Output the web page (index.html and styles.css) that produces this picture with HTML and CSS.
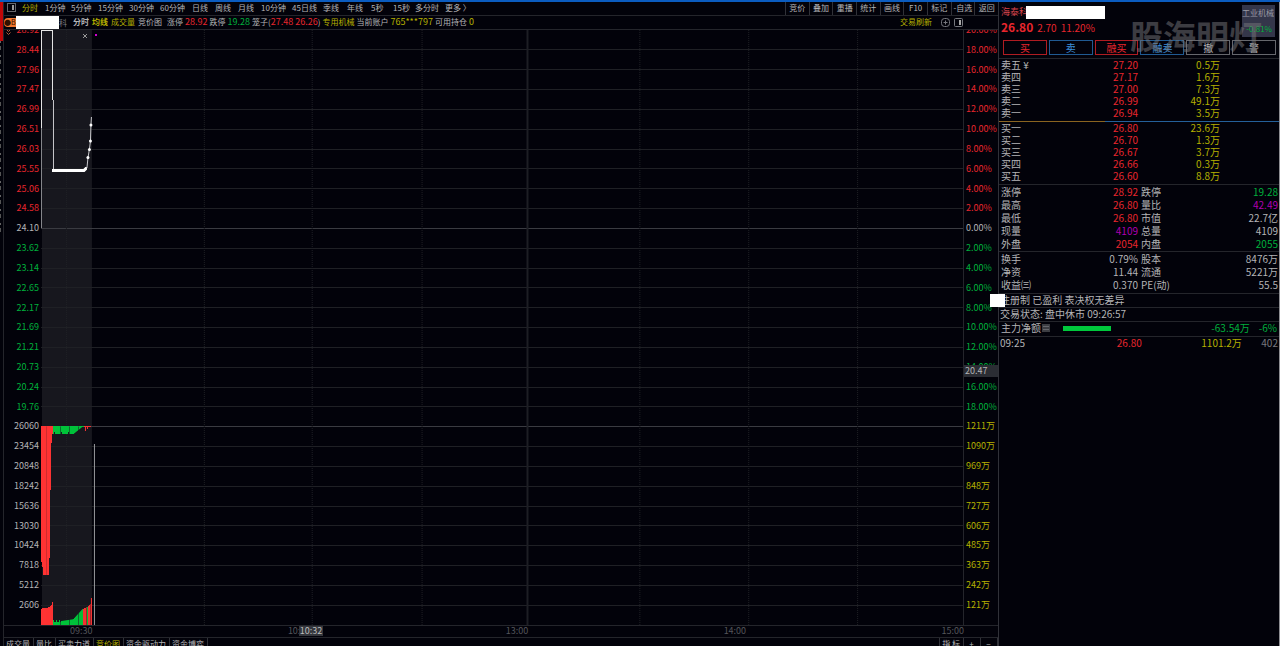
FILE: index.html
```html
<!DOCTYPE html>
<html lang="zh-CN">
<head>
<meta charset="utf-8">
<title>分时</title>
<link rel="stylesheet" href="styles.css">
</head>
<body>
<div class="app">
  <aside class="rail"><span class="rail-active"></span><span class="rail-marks"></span></aside>
  <main class="main">
    <nav class="toolbar">
      <button class="icon-btn" aria-label="侧栏"><svg width="9" height="9" viewBox="0 0 9 9"><rect x=".5" y=".5" width="8" height="8" fill="none" stroke="#66676c"/><rect x="5" y="2" width="2" height="5" fill="#999"/></svg></button>
      <div class="periods">
        <button class="yellow">分时</button><button>1分钟</button><button>5分钟</button><button>15分钟</button><button>30分钟</button><button>60分钟</button><button>日线</button><button>周线</button><button>月线</button><button>10分钟</button><button>45日线</button><button>季线</button><button>年线</button><button>5秒</button><button>15秒</button><button>多分时</button><button>更多 〉</button>
      </div>
      <div class="tools">
        <button>竞价</button><button>叠加</button><button>重播</button><button>统计</button><button>画线</button><button>F10</button><button>标记</button><button>-自选</button><button>返回</button>
      </div>
    </nav>
    <div class="info">
      <span class="badge">●B</span><span class="mask"></span><span class="dim">科</span>
      <div class="info-items">
        <b>分时</b><b class="yellow">均线</b><span class="series yellow">成交量</span><span class="series">竞价图</span>
        <span class="limit">涨停</span><i class="red">28.92</i><span>跌停</span><i class="green">19.28</i><span>笼子(<i class="red">27.48 26.26</i>)</span>
        <span class="yellow">专用机械</span><span>当前账户</span><i class="yellow">765***797</i><span>可用持仓</span><i class="yellow">0</i>
      </div>
      <button class="refresh yellow">交易刷新</button>
      <svg width="22" height="9" viewBox="0 0 22 9" fill="none" stroke="#77787e"><rect x=".5" y=".5" width="8" height="8" rx="3"/><path d="M4.500 2.500v4M2.500 4.500h4"/><rect x="13.500" y=".5" width="8" height="8" rx="1"/><rect x="18" y="2" width="2" height="5" fill="#aaa" stroke="none"/></svg>
    </div>
    <section class="chart">
      <div class="axis axis-left">
        <span class="red">28.92</span><span class="red">28.44</span><span class="red">27.96</span><span class="red">27.47</span><span class="red">26.99</span><span class="red">26.51</span><span class="red">26.03</span><span class="red">25.55</span><span class="red">25.06</span><span class="red">24.58</span><span>24.10</span><span class="green">23.62</span><span class="green">23.14</span><span class="green">22.65</span><span class="green">22.17</span><span class="green">21.69</span><span class="green">21.21</span><span class="green">20.73</span><span class="green">20.24</span><span class="green">19.76</span><span>26060</span><span>23454</span><span>20848</span><span>18242</span><span>15636</span><span>13030</span><span>10424</span><span>7818</span><span>5212</span><span>2606</span>
        <svg class="chevrons" width="5" height="6" viewBox="0 0 5 6" fill="none" stroke="#b86038"><path d="M.5.500l2 2 2-2M.5 3.500l2 2 2-2"/></svg>
      </div>
      <div class="plot">
        <svg class="graph" viewBox="0 0 923 595" preserveAspectRatio="none">
          <rect x="1" y="0" width="50" height="595" fill="#17171e"/>
          <g id="grid"></g>
          <g id="volume"></g>
          <g fill="none" stroke="#e8e8e8">
            <path d="M.5 0V98"/>
            <path d="M.5 98V198" stroke="#88898e"/>
            <path d="M0 0H12" stroke-width="2"/>
            <path d="M11.500 0V70"/>
            <path d="M12.500 70V140" stroke="#c8c8cc"/>
            <path d="M11 140.500H43l2-2h1" stroke="#fff" stroke-width="3"/>
            <path d="M46 138l1-10 1.500-9 1-8 .5-16 .5-8" stroke="#c8c8cc"/>
            <path d="M53.500 414V595" stroke="#98999e"/>
          </g>
          <g fill="#fff"><circle cx="47" cy="127.500" r="1.500"/><circle cx="48.500" cy="119.500" r="1.500"/><circle cx="49.500" cy="111" r="1.500"/><circle cx="50" cy="95" r="1.500"/></g>
        </svg>
        <button class="close" aria-label="关闭"><svg width="4" height="4" viewBox="0 0 4 4"><path d="M0 0l4 4M4 0L0 4" stroke="#999"/></svg></button>
        <span class="dot"></span>
      </div>
      <div class="axis axis-right">
        <span class="red">20.00%</span><span class="red">18.00%</span><span class="red">16.00%</span><span class="red">14.00%</span><span class="red">12.00%</span><span class="red">10.00%</span><span class="red">8.00%</span><span class="red">6.00%</span><span class="red">4.00%</span><span class="red">2.00%</span><span>0.00%</span><span class="green">2.00%</span><span class="green">4.00%</span><span class="green">6.00%</span><span class="green">8.00%</span><span class="green">10.00%</span><span class="green">12.00%</span><span class="green">14.00%</span><span class="green">16.00%</span><span class="green">18.00%</span><span class="yellow">1211万</span><span class="yellow">1090万</span><span class="yellow">969万</span><span class="yellow">848万</span><span class="yellow">727万</span><span class="yellow">606万</span><span class="yellow">485万</span><span class="yellow">363万</span><span class="yellow">242万</span><span class="yellow">121万</span>
        <output class="price-tag">20.47</output>
      </div>
    </section>
    <div class="times">
      <span>09:30</span><span>10:30</span><span>13:00</span><span>14:00</span><span>15:00</span>
      <output class="time-tag">10:32</output>
    </div>
    <nav class="tabs">
      <button>成交量</button><button>量比</button><button>买卖力道</button><button class="yellow">竞价图</button><button>资金驱动力</button><button>资金博弈</button>
      <button class="tab-right">指 标</button><button class="zoom">+</button><button class="zoom">−</button>
    </nav>
  </main>
  <aside class="quote">
    <header class="head">
      <div class="name">海泰科<span class="name-mask"></span></div>
      <div class="price"><strong>26.80</strong><span>2.70</span><span>11.20%</span></div>
      <div class="sector">工业机械<em>-0.81%</em></div>
      <div class="actions"><button class="buy">买</button><button class="sell">卖</button><button class="buy">融买</button><button class="sell">融卖</button><button>撤</button><button>警</button></div>
      <div class="watermark">股海明灯</div>
    </header>
    <table class="book">
      <tr><th>卖五 ¥</th><td>27.20</td><td>0.5万</td></tr>
      <tr><th>卖四</th><td>27.17</td><td>1.6万</td></tr>
      <tr><th>卖三</th><td>27.00</td><td>7.3万</td></tr>
      <tr><th>卖二</th><td>26.99</td><td>49.1万</td></tr>
      <tr><th>卖一</th><td>26.94</td><td>3.5万</td></tr>
    </table>
    <div class="ratio"></div>
    <table class="book">
      <tr><th>买一</th><td>26.80</td><td>23.6万</td></tr>
      <tr><th>买二</th><td>26.70</td><td>1.3万</td></tr>
      <tr><th>买三</th><td>26.67</td><td>3.7万</td></tr>
      <tr><th>买四</th><td>26.66</td><td>0.3万</td></tr>
      <tr><th>买五</th><td>26.60</td><td>8.8万</td></tr>
    </table>
    <div class="block">
      <table class="stats">
        <tr><th>涨停</th><td class="red">28.92</td><th>跌停</th><td class="green">19.28</td></tr>
        <tr><th>最高</th><td class="red">26.80</td><th>量比</th><td class="purple">42.49</td></tr>
        <tr><th>最低</th><td class="red">26.80</td><th>市值</th><td>22.7亿</td></tr>
        <tr><th>现量</th><td class="purple">4109</td><th>总量</th><td>4109</td></tr>
        <tr><th>外盘</th><td class="red">2054</td><th>内盘</th><td class="green">2055</td></tr>
      </table>
    </div>
    <div class="block basics">
      <table class="stats">
        <tr><th>换手</th><td>0.79%</td><th>股本</th><td>8476万</td></tr>
        <tr><th>净资</th><td>11.44</th><th>流通</th><td>5221万</td></tr>
        <tr><th>收益㈢</th><td>0.370</td><th>PE(动)</th><td>55.5</td></tr>
      </table>
    </div>
    <div class="line tags"><span class="tag-mask"></span>注册制 已盈利 表决权无差异</div>
    <div class="line">交易状态: 盘中休市 09:26:57</div>
    <div class="line flow"><span>主力净额</span><button class="mini" aria-label="列表"><svg width="8" height="8" viewBox="0 0 8 8"><rect width="8" height="8" fill="#3c3d42"/><path d="M1 2.500h6M1 5.500h6" stroke="#66676c"/></svg></button><span class="bar"></span><span class="green net">-63.54万</span><span class="green">-6%</span></div>
    <div class="trade"><span>09:25</span><span class="red">26.80</span><span class="yellow">1101.2万</span><span class="dim">402</span></div>
  </aside>
</div>
<script src="chart.js"></script>
</body>
</html>
```

FILE: styles.css
```css
* { box-sizing: border-box; }
:root { --line: #24252b; --red: #e8262d; --green: #00b03c; --yellow: #b5b000; --text: #b4b4b6; }
body { margin: 0; background: #02020a; color: var(--text); font: 9px/12px "Noto Sans CJK SC", "Open Sans", sans-serif; }
button { margin: 0; padding: 0; border: 0; background: none; color: inherit; font: inherit; white-space: nowrap; }
i, em { font-style: normal; }
.red { color: var(--red); }
.green { color: var(--green); }
.yellow { color: var(--yellow); }
.purple { color: #b000b0; }
.dim { color: #77787e; }
.app { display: flex; height: 100vh; border-top: 2px solid #0b5cc0; overflow: hidden; }
.rail { display: flex; flex-direction: column; flex: none; width: 4px; border-right: 1px solid var(--line); }
.rail-active { height: 39px; background: #c00808; }
.rail-marks { flex: 1; width: 1px; max-height: 192px; background: repeating-linear-gradient(#666 0 2px, #02020a 2px 5px, #555 5px 9px, #02020a 9px 14px); }
.main { display: flex; flex: 1; flex-direction: column; min-width: 0; border-right: 1px solid #303138; }

.toolbar { display: flex; height: 14px; flex: none; border-bottom: 1px solid var(--line); line-height: 11px; font-size: 8px; }
.icon-btn { display: flex; flex: none; width: 18px; padding: 1px 0 0 3px; }
.periods { display: grid; flex: 1; grid-template-columns: 23px 26px 27px 31px 31px 32px 23px 23px 23px 31px 31px 24px 24px 22px 22px 30px auto; }
.periods button { padding-bottom: 2px; text-align: left; }
.tools { display: grid; flex: none; width: 213px; grid-template-columns: repeat(9, 1fr); }
.tools button { padding-bottom: 2px; border-left: 1px solid #303138; text-align: center; }

.info { position: relative; z-index: 1; display: flex; align-items: center; flex: none; height: 14px; padding-right: 35px; border-bottom: 1px solid var(--line); background: #02020a; font-size: 8px; line-height: 12px; white-space: nowrap; }
.badge { flex: none; width: 12px; height: 9px; border-radius: 4px 0 0 4px; background: #f07830; color: #301000; font-size: 7px; line-height: 9px; }
.mask { flex: none; width: 43px; height: 13px; background: #fff; }
.info-items { display: flex; flex: 1; gap: 2px; margin: 0 0 2px 6px; }
.info-items i { font-size: 9px; }
.info-items b, .series { margin-right: 1px; }
.limit { margin-left: 2px; }
.refresh { margin: 0 9px 2px 0; }

.chart { display: flex; flex: 1; min-height: 0; }
.axis { display: flex; position: relative; flex: none; flex-direction: column; margin: -10px 0 10px; }
.axis span { display: flex; flex: 1; align-items: center; min-height: 0; }
.axis-left { width: 37px; padding-right: 2px; }
.axis-left span { justify-content: flex-end; }
.axis-right { width: 34px; padding-left: 2px; }
.chevrons { position: absolute; top: 9px; left: 2px; }
.price-tag { position: absolute; top: 57%; left: 0; width: 100%; margin-top: 6px; padding-left: 1px; background: #2b2d34; line-height: 12px; }
.plot { position: relative; flex: 1; min-width: 0; border-right: 1px solid var(--line); }
.graph { position: absolute; width: 100%; height: 100%; }
.close { display: flex; position: absolute; top: 4px; left: 42px; }
.dot { position: absolute; top: 4px; left: 54px; width: 2px; height: 2px; background: #d000d0; }

.times { display: flex; position: relative; flex: none; justify-content: space-between; height: 13px; padding: 0 34px 0 66px; border-top: 1px solid var(--line); border-bottom: 1px solid var(--line); color: #54555a; line-height: 10px; }
.time-tag { position: absolute; left: 295px; width: 24px; background: #34363c; color: #bbb; text-align: center; }
.tabs { display: flex; flex: none; height: 8px; overflow: hidden; font-size: 8px; line-height: 10px; }
.tabs button { height: 12px; padding: 0 3px 0 2px; border-right: 1px solid #303138; }
.tabs .tab-right { margin-left: auto; border-left: 1px solid #303138; }
.tabs .zoom { width: 17px; }

.quote { display: flex; flex: none; flex-direction: column; width: 281px; border-right: 1px solid #8d8d92; font-size: 10px; }
.head { position: relative; flex: none; height: 57px; padding: 3px 3px 0 2px; border-bottom: 1px solid var(--line); }
.name { display: flex; align-items: center; height: 14px; color: #d8444c; font-size: 9px; }
.name-mask { flex: none; width: 79px; height: 13px; margin-left: -2px; background: #fff; }
.price { display: flex; align-items: baseline; gap: 4px; height: 21px; color: var(--red); line-height: 16px; }
.price strong { font-size: 12px; }
.sector { position: absolute; top: 3px; right: 4px; width: 33px; height: 32px; background: #34364a; color: #9a9aa4; font-size: 8px; line-height: 16px; white-space: nowrap; }
.sector em { display: block; padding-right: 3px; text-align: right; color: var(--green); }
.actions { display: grid; grid-template-columns: repeat(6, 1fr); gap: 2px; padding-left: 2px; }
.actions button { height: 15px; border: 1px solid #66676d; line-height: 12px; }
.actions .buy { border-color: #b01c22; color: var(--red); }
.actions .sell { border-color: #205a92; color: #3d8fd8; }
.watermark { position: absolute; top: 10px; right: 17px; color: #77777a; font-size: 33px; font-weight: 700; line-height: 46px; opacity: .5; pointer-events: none; }

table { width: 100%; border-collapse: collapse; table-layout: fixed; }
th, td { padding: 0; font-weight: 400; line-height: 12px; white-space: nowrap; }
th { padding-left: 2px; text-align: left; }
td { text-align: right; }
.book th { width: 25%; }
.book td { width: 25%; padding-right: 1px; color: var(--red); }
.book td:last-child { width: 50%; padding-right: 59px; color: var(--yellow); }
.ratio { flex: none; height: 1px; margin: 2px 0 0; background: linear-gradient(90deg, #8a6420 38%, #24609a 38%); }
.block { padding-bottom: 1px; border-top: 1px solid var(--line); }
.book + .block { margin-top: 2px; }
.block.basics { padding-bottom: 2px; }
.stats th, .stats td { line-height: 13px; }
.stats td { padding-right: 1px; }
.line { position: relative; padding-left: 1px; border-top: 1px solid var(--line); line-height: 12px; padding-bottom: 1px; }
.tag-mask { position: absolute; top: 0; left: -9px; width: 15px; height: 13px; background: #fff; }
.flow { display: flex; align-items: center; padding: 0 2px 2px 2px; border-bottom: 1px solid var(--line); }
.mini { display: flex; margin: 0 13px 0 1px; }
.bar { width: 48px; height: 5px; background: #00c83c; }
.net { margin: 0 9px 0 auto; }
.trade { display: grid; grid-template-columns: 20% 31% 36% 13%; padding: 0 1px; text-align: right; }
.trade span:first-child { text-align: left; }
```

FILE: chart.js
```js
const NS = "http://www.w3.org/2000/svg";
const ROWS = 30;
const STEP = 595 / ROWS;
const RED = "#ff3434";
const GREEN = "#00c83c";

function add(parent, tag, attrs) {
  const el = document.createElementNS(NS, tag);
  for (const key in attrs) el.setAttribute(key, attrs[key]);
  document.getElementById(parent).appendChild(el);
}

for (let k = 1; k < ROWS; k++) {
  const strong = k === 10 || k === 20;
  add("grid", "rect", { x: 0, y: Math.round(k * STEP - 0.5), width: 923, height: 1, fill: strong ? "#3a3b41" : "#1f2025" });
}
for (const x of [25, 163, 271, 381, 599, 708, 817]) {
  add("grid", "path", { d: `M${x}.5 0V595`, stroke: "#1f2025", "stroke-dasharray": "1 1" });
}
add("grid", "rect", { x: 486, y: 0, width: 2, height: 595, fill: "#1d1e24" });

// Matched volume grows up from the base; unmatched volume hangs from the upper line.
const hanging = [136, 141, 149, 149, 149, 149, 149, 149, 132, 64, 17, 8];
hanging.forEach((h, i) => add("volume", "rect", { x: i, y: 396, width: i === 5 ? 0.8 : 1, height: h, fill: RED }));
for (let i = 12; i < 43; i++) {
  const h = i < 33 ? (i % 7 === 6 ? 6 : 8) : Math.max(1, 8 - (i - 32) * 0.8);
  add("volume", "rect", { x: i, y: 396, width: i % 9 === 1 ? 0.5 : 1, height: h, fill: GREEN });
}
[1, 5, 1, 3, 1, 1, 1].forEach((h, i) => add("volume", "rect", { x: 43 + i, y: 396, width: 1, height: h, fill: RED }));

const base = [16, 17, 17, 17, 17, 17, 17, 18, 18, 19, 20, 23];
base.forEach((h, i) => add("volume", "rect", { x: i, y: 595 - h, width: 1, height: h, fill: RED }));
for (let i = 12; i < 42; i++) {
  const h = i < 20 ? (i % 3 ? 3 : 5) : i < 32 ? 4 + (i - 20) * 0.15 : 6 + (i - 32) * 1.1;
  add("volume", "rect", { x: i, y: 595 - h, width: i % 9 === 1 ? 0.5 : 1, height: h, fill: GREEN });
}
[16, 17, 17, 18, 18, 19, 20, 21, 27].forEach((h, i) => add("volume", "rect", { x: 42 + i, y: 595 - h, width: i % 4 === 3 ? 0.6 : 1, height: h, fill: i === 4 ? GREEN : RED }));
```
